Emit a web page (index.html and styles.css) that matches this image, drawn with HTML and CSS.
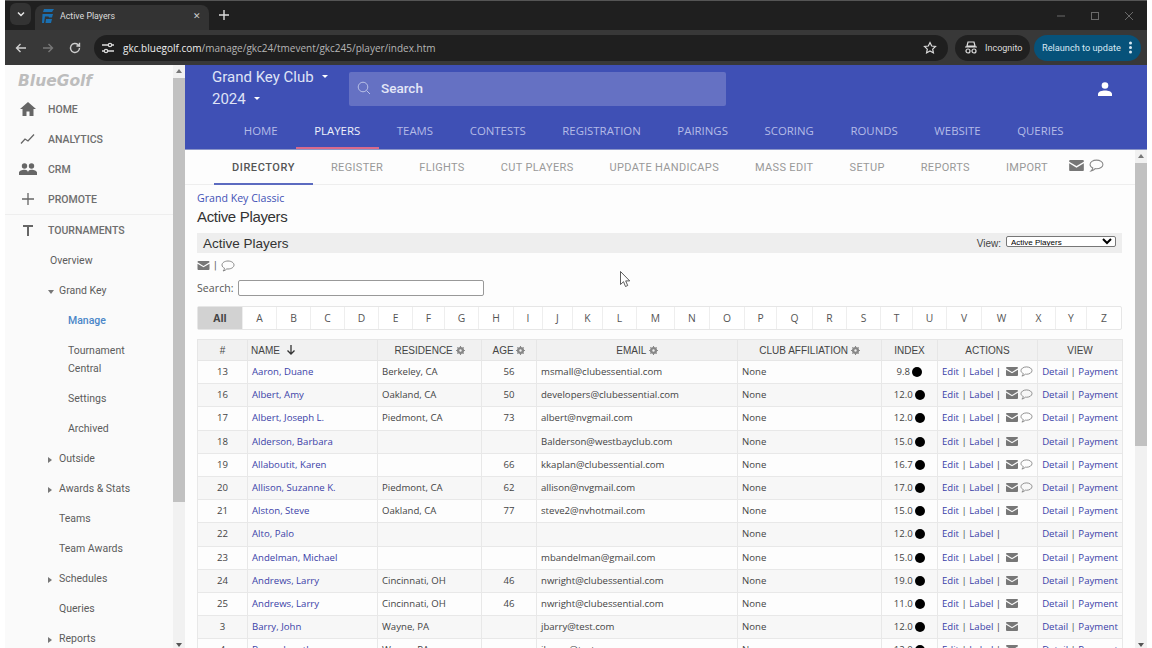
FILE: index.html
```html
<!DOCTYPE html>
<html lang="en">
<head>
<meta charset="utf-8">
<title>Active Players</title>
<link rel="stylesheet" href="styles.css">
</head>
<body>
<svg class="defs" width="0" height="0" aria-hidden="true">
  <symbol id="mail" viewBox="0 0 16 12"><path d="M0 1.2C0 .5.5 0 1.2 0h13.600c.7 0 1.200.5 1.200 1.200v.6L8 6.600 0 1.800z"/><path d="M0 3.600l8 4.800 8-4.800v7.200c0 .7-.5 1.200-1.200 1.200H1.200C.5 12 0 11.500 0 10.800z"/></symbol>
  <symbol id="chat" viewBox="0 0 14 12"><path d="M7 1C3.600 1 1 2.800 1 5c0 1.400 1 2.600 2.600 3.300C3.400 9.300 2.800 10.300 2 11c1.500-.3 2.900-1 3.800-2.100.4 0 .8.100 1.200.100 3.400 0 6-1.800 6-4s-2.600-4-6-4z" fill="none" stroke="currentColor"/></symbol>
  <symbol id="gear" viewBox="0 0 10 10"><circle cx="5" cy="5" r="2.900" fill="none" stroke="currentColor" stroke-width="2.200"/><path d="M5 0v10M0 5h10M1.500 1.500l7 7M8.500 1.500l-7 7" stroke="currentColor" stroke-width="1.200"/><circle cx="5" cy="5" r="1.300" fill="#f1f1f1"/></symbol>
</svg>
<div class="window">
  <div class="tabstrip">
    <div class="tab-menu"><svg width="10" height="10" viewBox="0 0 10 10"><path d="M2 3.500l3 3 3-3" fill="none" stroke="#e8e8e8" stroke-width="1.500"/></svg></div>
    <div class="tab">
      <svg class="favicon" width="12" height="14" viewBox="0 0 12 14"><path d="M2 0h10L10 3H1zM.5 5H11l-1 3.500H7l-.5-1H3L2 14H0zM4 10h6l-1 4H3.500z" fill="#1a6fb0"/></svg>
      <span class="tab-title">Active Players</span>
      <span class="tab-close">✕</span>
    </div>
    <svg class="tab-new" width="12" height="12" viewBox="0 0 12 12"><path d="M6 1v10M1 6h10" stroke="#ddd" stroke-width="1.400"/></svg>
    <div class="winctl">
      <svg width="10" height="10" viewBox="0 0 10 10"><path d="M1 5h8" stroke="#6a6a6a"/></svg>
      <svg width="10" height="10" viewBox="0 0 10 10"><rect x="1.500" y="1.500" width="7" height="7" fill="none" stroke="#6a6a6a"/></svg>
      <svg width="10" height="10" viewBox="0 0 10 10"><path d="M1 1l8 8M9 1l-8 8" stroke="#6a6a6a"/></svg>
    </div>
  </div>
  <div class="toolbar">
    <svg class="tool" width="14" height="14" viewBox="0 0 14 14"><path d="M12 7H2.500M6.500 3l-4 4 4 4" fill="none" stroke="#cfcfcf" stroke-width="1.400"/></svg>
    <svg class="tool" width="14" height="14" viewBox="0 0 14 14"><path d="M2 7h9.500M7.500 3l4 4-4 4" fill="none" stroke="#777" stroke-width="1.400"/></svg>
    <svg class="tool" width="14" height="14" viewBox="0 0 14 14"><path d="M11.500 7a4.500 4.500 0 1 1-1.400-3.300L11.500 5V1.800M11.500 5H8.400" fill="none" stroke="#cfcfcf" stroke-width="1.400"/></svg>
    <div class="omnibox">
      <svg class="site" width="14" height="12" viewBox="0 0 14 12"><path d="M1 3h6M11 3h2M1 9h2M7 9h6" stroke="#ddd" stroke-width="1.300"/><circle cx="9" cy="3" r="1.700" fill="none" stroke="#ddd" stroke-width="1.200"/><circle cx="5" cy="9" r="1.700" fill="none" stroke="#ddd" stroke-width="1.200"/></svg>
      <span class="url"><b>gkc.bluegolf.com</b>/manage/gkc24/tmevent/gkc245/player/index.htm</span>
      <svg class="star" width="14" height="14" viewBox="0 0 14 14"><path d="M7 1.500l1.700 3.500 3.800.5-2.800 2.600.7 3.800L7 10l-3.400 1.900.7-3.800L1.500 5.500 5.300 5z" fill="none" stroke="#ddd" stroke-width="1.200"/></svg>
    </div>
    <div class="incognito">
      <svg width="14" height="13" viewBox="0 0 14 13"><path d="M4 1h6l1 4H3zM1 6h12" fill="none" stroke="#ddd" stroke-width="1.200"/><circle cx="4" cy="10" r="2" fill="none" stroke="#ddd" stroke-width="1.200"/><circle cx="10" cy="10" r="2" fill="none" stroke="#ddd" stroke-width="1.200"/></svg>
      <span>Incognito</span>
    </div>
    <div class="relaunch"><span>Relaunch to update</span><i class="dots"></i></div>
  </div>
  <div class="viewport">
    <aside class="sidebar">
      <div class="side-scroll">
        <div class="logo">BlueGolf</div>
        <a class="side-main"><svg width="16" height="14" viewBox="0 0 16 14"><path d="M8 0L0 7h2.500v7h4V9.500h3V14h4V7H16z" fill="#666"/></svg><span>HOME</span></a>
        <a class="side-main"><svg width="16" height="12" viewBox="0 0 16 12"><path d="M1 10.500l4-4.500 3 2 6-6.500" fill="none" stroke="#666" stroke-width="1.300"/></svg><span>ANALYTICS</span></a>
        <a class="side-main"><svg class="wide" width="18" height="12" viewBox="0 0 18 12"><circle cx="5.500" cy="3" r="2.700" fill="#666"/><circle cx="12.500" cy="3" r="2.700" fill="#666"/><path d="M0 12V9.500C0 8 3 6.800 5.500 6.800S9 8 9 9.500V12zM9 12V9.500C9 8 10 6.800 12.500 6.800S18 8 18 9.500V12z" fill="#666"/></svg><span>CRM</span></a>
        <a class="side-main"><svg width="12" height="12" viewBox="0 0 12 12"><path d="M6 0v12M0 6h12" stroke="#666" stroke-width="1.300"/></svg><span>PROMOTE</span></a>
        <a class="side-main tour"><svg width="12" height="12" viewBox="0 0 12 12"><path d="M1 1h10v2H7v9H5V3H1z" fill="#666"/></svg><span>TOURNAMENTS</span></a>
        <a class="side-sub l1">Overview</a>
        <a class="side-sub l2 open">Grand Key</a>
        <a class="side-sub l3 current">Manage</a>
        <a class="side-sub l3 two">Tournament Central</a>
        <a class="side-sub l3">Settings</a>
        <a class="side-sub l3">Archived</a>
        <a class="side-sub l2 closed">Outside</a>
        <a class="side-sub l2 closed">Awards &amp; Stats</a>
        <a class="side-sub l2">Teams</a>
        <a class="side-sub l2">Team Awards</a>
        <a class="side-sub l2 closed">Schedules</a>
        <a class="side-sub l2">Queries</a>
        <a class="side-sub l2 closed">Reports</a>
      </div>
      <div class="scrollbar side-bar"><i class="arrow up"></i><i class="thumb"></i><i class="arrow down"></i></div>
    </aside>
    <div class="content">
      <header class="top">
        <div class="top-row">
          <div class="club">
            <div class="club-line">Grand Key Club <i class="caret"></i></div>
            <div class="club-line">2024 <i class="caret"></i></div>
          </div>
          <div class="search">
            <svg width="14" height="14" viewBox="0 0 14 14"><circle cx="6" cy="6" r="4.800" fill="none" stroke="#b9c0e6"/><path d="M9.500 9.500L13 13" stroke="#b9c0e6"/></svg>
            <span>Search</span>
          </div>
          <svg class="user" width="14" height="14" viewBox="0 0 14 14"><circle cx="7" cy="3.500" r="3.300" fill="#fff"/><path d="M0 14v-2c0-2.600 4-3.600 7-3.600s7 1 7 3.600v2z" fill="#fff"/></svg>
        </div>
        <nav class="mainnav">
          <a>HOME</a><a class="active">PLAYERS</a><a>TEAMS</a><a>CONTESTS</a><a>REGISTRATION</a><a>PAIRINGS</a><a>SCORING</a><a>ROUNDS</a><a>WEBSITE</a><a>QUERIES</a>
        </nav>
      </header>
      <div class="below">
        <main class="page">
          <nav class="subnav">
            <a class="active">DIRECTORY</a><a>REGISTER</a><a>FLIGHTS</a><a>CUT PLAYERS</a><a>UPDATE HANDICAPS</a><a>MASS EDIT</a><a>SETUP</a><a>REPORTS</a><a>IMPORT</a>
            <span class="sub-icons"><svg class="mail big"><use href="#mail"/></svg><svg class="chat big"><use href="#chat"/></svg></span>
          </nav>
          <div class="body">
            <a class="crumb">Grand Key Classic</a>
            <h1>Active Players</h1>
            <div class="section">
              <h2>Active Players</h2>
              <label class="view">View:<select><option>Active Players</option></select></label>
            </div>
            <div class="msg"><svg class="mail med"><use href="#mail"/></svg><span>|</span><svg class="chat med"><use href="#chat"/></svg></div>
            <div class="searchrow"><span>Search:</span><input type="text"></div>
            <div class="alpha">
              <a class="on">All</a><a>A</a><a>B</a><a>C</a><a>D</a><a>E</a><a>F</a><a>G</a><a>H</a><a>I</a><a>J</a><a>K</a><a>L</a><a>M</a><a>N</a><a>O</a><a>P</a><a>Q</a><a>R</a><a>S</a><a>T</a><a>U</a><a>V</a><a>W</a><a>X</a><a>Y</a><a>Z</a>
            </div>
            <table class="players">
              <colgroup><col class="c1"><col class="c2"><col class="c3"><col class="c4"><col class="c5"><col class="c6"><col class="c7"><col class="c8"><col class="c9"></colgroup>
              <thead>
                <tr>
                  <th>#</th>
                  <th class="left">NAME <svg class="sort" width="10" height="10" viewBox="0 0 10 10"><path d="M5 0v9M1.500 5.500L5 9l3.500-3.500" fill="none" stroke="#333" stroke-width="1.300"/></svg></th>
                  <th>RESIDENCE <svg class="gear"><use href="#gear"/></svg></th>
                  <th>AGE <svg class="gear"><use href="#gear"/></svg></th>
                  <th>EMAIL <svg class="gear"><use href="#gear"/></svg></th>
                  <th>CLUB AFFILIATION <svg class="gear"><use href="#gear"/></svg></th>
                  <th>INDEX</th><th>ACTIONS</th><th>VIEW</th>
                </tr>
              </thead>
              <tbody id="rows">
                <tr><td class="n">13</td><td><a>Aaron, Duane</a></td><td>Berkeley, CA</td><td class="n">56</td><td>msmall@clubessential.com</td><td>None</td><td class="n">9.8 <i class="dot"></i></td><td class="act"><a>Edit</a> | <a>Label</a> | <svg class="mail sm"><use href="#mail"/></svg> <svg class="chat sm"><use href="#chat"/></svg></td><td class="n"><a>Detail</a> | <a>Payment</a></td></tr>
                <tr><td class="n">16</td><td><a>Albert, Amy</a></td><td>Oakland, CA</td><td class="n">50</td><td>developers@clubessential.com</td><td>None</td><td class="n">12.0 <i class="dot"></i></td><td class="act"><a>Edit</a> | <a>Label</a> | <svg class="mail sm"><use href="#mail"/></svg> <svg class="chat sm"><use href="#chat"/></svg></td><td class="n"><a>Detail</a> | <a>Payment</a></td></tr>
                <tr><td class="n">17</td><td><a>Albert, Joseph L.</a></td><td>Piedmont, CA</td><td class="n">73</td><td>albert@nvgmail.com</td><td>None</td><td class="n">12.0 <i class="dot"></i></td><td class="act"><a>Edit</a> | <a>Label</a> | <svg class="mail sm"><use href="#mail"/></svg> <svg class="chat sm"><use href="#chat"/></svg></td><td class="n"><a>Detail</a> | <a>Payment</a></td></tr>
                <tr><td class="n">18</td><td><a>Alderson, Barbara</a></td><td></td><td class="n"></td><td>Balderson@westbayclub.com</td><td>None</td><td class="n">15.0 <i class="dot"></i></td><td class="act"><a>Edit</a> | <a>Label</a> | <svg class="mail sm"><use href="#mail"/></svg></td><td class="n"><a>Detail</a> | <a>Payment</a></td></tr>
                <tr><td class="n">19</td><td><a>Allaboutit, Karen</a></td><td></td><td class="n">66</td><td>kkaplan@clubessential.com</td><td>None</td><td class="n">16.7 <i class="dot"></i></td><td class="act"><a>Edit</a> | <a>Label</a> | <svg class="mail sm"><use href="#mail"/></svg> <svg class="chat sm"><use href="#chat"/></svg></td><td class="n"><a>Detail</a> | <a>Payment</a></td></tr>
                <tr><td class="n">20</td><td><a>Allison, Suzanne K.</a></td><td>Piedmont, CA</td><td class="n">62</td><td>allison@nvgmail.com</td><td>None</td><td class="n">17.0 <i class="dot"></i></td><td class="act"><a>Edit</a> | <a>Label</a> | <svg class="mail sm"><use href="#mail"/></svg> <svg class="chat sm"><use href="#chat"/></svg></td><td class="n"><a>Detail</a> | <a>Payment</a></td></tr>
                <tr><td class="n">21</td><td><a>Alston, Steve</a></td><td>Oakland, CA</td><td class="n">77</td><td>steve2@nvhotmail.com</td><td>None</td><td class="n">15.0 <i class="dot"></i></td><td class="act"><a>Edit</a> | <a>Label</a> | <svg class="mail sm"><use href="#mail"/></svg></td><td class="n"><a>Detail</a> | <a>Payment</a></td></tr>
                <tr><td class="n">22</td><td><a>Alto, Palo</a></td><td></td><td class="n"></td><td></td><td>None</td><td class="n">12.0 <i class="dot"></i></td><td class="act"><a>Edit</a> | <a>Label</a> |</td><td class="n"><a>Detail</a> | <a>Payment</a></td></tr>
                <tr><td class="n">23</td><td><a>Andelman, Michael</a></td><td></td><td class="n"></td><td>mbandelman@gmail.com</td><td>None</td><td class="n">15.0 <i class="dot"></i></td><td class="act"><a>Edit</a> | <a>Label</a> | <svg class="mail sm"><use href="#mail"/></svg></td><td class="n"><a>Detail</a> | <a>Payment</a></td></tr>
                <tr><td class="n">24</td><td><a>Andrews, Larry</a></td><td>Cincinnati, OH</td><td class="n">46</td><td>nwright@clubessential.com</td><td>None</td><td class="n">19.0 <i class="dot"></i></td><td class="act"><a>Edit</a> | <a>Label</a> | <svg class="mail sm"><use href="#mail"/></svg></td><td class="n"><a>Detail</a> | <a>Payment</a></td></tr>
                <tr><td class="n">25</td><td><a>Andrews, Larry</a></td><td>Cincinnati, OH</td><td class="n">46</td><td>nwright@clubessential.com</td><td>None</td><td class="n">11.0 <i class="dot"></i></td><td class="act"><a>Edit</a> | <a>Label</a> | <svg class="mail sm"><use href="#mail"/></svg></td><td class="n"><a>Detail</a> | <a>Payment</a></td></tr>
                <tr><td class="n">3</td><td><a>Barry, John</a></td><td>Wayne, PA</td><td class="n"></td><td>jbarry@test.com</td><td>None</td><td class="n">12.0 <i class="dot"></i></td><td class="act"><a>Edit</a> | <a>Label</a> | <svg class="mail sm"><use href="#mail"/></svg></td><td class="n"><a>Detail</a> | <a>Payment</a></td></tr>
                <tr><td class="n">4</td><td><a>Byrne, Jonathan</a></td><td>Wayne, PA</td><td class="n"></td><td>jbyrne@test.com</td><td>None</td><td class="n">12.0 <i class="dot"></i></td><td class="act"><a>Edit</a> | <a>Label</a> | <svg class="mail sm"><use href="#mail"/></svg></td><td class="n"><a>Detail</a> | <a>Payment</a></td></tr>
              </tbody>
            </table>
          </div>
        </main>
        <div class="scrollbar main-bar"><i class="arrow up"></i><i class="thumb"></i><i class="arrow down"></i></div>
      </div>
    </div>
  </div>
</div>
<svg class="cursor" width="11" height="17" viewBox="0 0 11 17"><path d="M.5.500v13l3-2.800 2 4.800 2.200-1-2-4.600h4z" fill="#fff" stroke="#333" stroke-width=".8"/></svg>
</body>
</html>
```
FILE: styles.css
```css
* { box-sizing: border-box; }
html, body { margin: 0; height: 100%; overflow: hidden; background: #fff; }
body { font-family: Roboto, sans-serif; color: #444; position: relative; }
a { text-decoration: none; }
.defs { position: absolute; }

.window { height: 648px; margin: 0 5px; display: flex; flex-direction: column; }

.tabstrip { height: 30px; flex: none; background: #1f1f1f; border-top: 1px solid #555; display: flex; align-items: flex-end; padding-left: 5px; }
.tab-menu { width: 21px; height: 22px; margin-bottom: 5px; background: #333; border-radius: 6px; display: flex; align-items: center; justify-content: center; }
.tab { width: 174px; height: 25px; margin-left: 4px; background: #333; border-radius: 8px 8px 0 0; display: flex; align-items: center; padding: 0 8px 4px 7px; }
.favicon { margin-right: 6px; flex: none; }
.tab-title { flex: 1; font: 8.800px Roboto, sans-serif; color: #ddd; }
.tab-close { font-size: 9px; color: #ccc; }
.tab-new { margin: 0 0 9px 9px; }
.winctl { margin-left: auto; display: flex; gap: 24px; padding-right: 13px; margin-bottom: 9px; }

.toolbar { height: 35px; flex: none; background: #383838; display: flex; align-items: center; padding: 0 5px 0 9px; }
.tool { margin-right: 13px; flex: none; }
.omnibox { width: 854px; height: 26px; margin-left: -1px; background: #1f1f1f; border-radius: 13px; display: flex; align-items: center; padding: 0 11px 0 7px; }
.site { margin-right: 8px; }
.url { font: 10px "Open Sans", sans-serif; color: #b5b5b5; flex: 1; white-space: nowrap; }
.url b { font-weight: 400; color: #eee; }
.incognito { width: 75px; height: 26px; margin-left: 7px; background: #202020; border-radius: 13px; display: flex; align-items: center; gap: 7px; padding-left: 9px; font: 9px Roboto, sans-serif; color: #ddd; flex: none; }
.relaunch { width: 107px; height: 26px; margin-left: 4px; background: #07527a; border-radius: 13px; display: flex; align-items: center; justify-content: space-between; padding: 0 9px 0 8px; font: 9.200px Roboto, sans-serif; color: #d7e8f3; flex: none; white-space: nowrap; }
.dots { width: 3px; height: 3px; border-radius: 50%; background: #d7e8f3; box-shadow: 0 -4.500px 0 #d7e8f3, 0 4.500px 0 #d7e8f3; }

.viewport { flex: 1; min-height: 0; display: flex; }

.sidebar { width: 180px; flex: none; display: flex; background: #fafafa; }
.side-scroll { flex: 1; min-width: 0; overflow: hidden; }
.logo { height: 29px; padding: 7px 0 0 13px; font: italic 700 15.500px/18px "DejaVu Sans", sans-serif; color: #bdbdbd; }
.side-main { display: flex; align-items: center; height: 30px; font-size: 10.500px; font-weight: 500; color: #6e6e6e; }
.side-main svg { width: 18px; margin-left: 14px; flex: none; }
.side-main span { margin-left: 11px; }
.side-main.tour { border-top: 1px solid #eee; height: 31px; margin-bottom: 1px; }
.side-sub { display: block; font-size: 10.500px; line-height: 18px; color: #5c5c5c; padding: 6px 10px 6px 0; position: relative; }
.l1 { padding-left: 45px; }
.l2 { padding-left: 54px; }
.l3 { padding-left: 63px; }
.two { width: 150px; }
.current { color: #4a86c8; font-weight: 500; }
.open::before, .closed::before { content: ""; position: absolute; left: 43px; top: 13px; border: 3px solid transparent; }
.open::before { border-top: 4px solid #777; border-bottom: 0; top: 14px; }
.closed::before { border-left: 4px solid #777; border-right: 0; }

.scrollbar { width: 12px; flex: none; background: #f1f1f1; display: flex; flex-direction: column; align-items: center; position: relative; }
.thumb { display: block; width: 100%; background: #c1c1c1; }
.arrow { display: block; position: absolute; border: 3px solid transparent; }
.arrow.up { top: 4px; border-bottom: 4px solid #777; border-top: 0; }
.arrow.down { bottom: 1px; border-top: 4px solid #555; border-bottom: 0; }
.side-bar .thumb { height: 424px; margin-top: 13px; }
.main-bar .thumb { height: 283px; margin-top: 13px; }

.content { flex: 1; min-width: 0; display: flex; flex-direction: column; }
.top { height: 85px; flex: none; background: #3f50b5; border-bottom: 1px solid #8c96c8; }
.top-row { height: 51px; display: flex; }
.club { width: 164px; padding: 1px 0 0 27px; }
.club-line { height: 22px; font-size: 15px; line-height: 22px; color: #dfe3f5; }
.caret { display: inline-block; margin: 0 0 3px 5px; vertical-align: middle; border: 3px solid transparent; border-top: 3px solid #fff; border-bottom: 0; }
.search { width: 377px; height: 34px; margin-top: 7px; background: #6571c3; border-radius: 2px; display: flex; align-items: center; gap: 10px; padding: 0 0 2px 8px; font-size: 13.500px; font-weight: 500; color: #e4e7f7; }
.user { margin: 17px 35px 0 auto; }
.mainnav { height: 33px; display: flex; padding-left: 40.500px; }
.mainnav a { padding: 0 18.300px; font: 500 11.400px/30px "Open Sans", sans-serif; color: #b4bbe7; height: 33px; }
.mainnav a.active { color: #eef0fb; border-bottom: 2px solid #d86a8c; }

.below { flex: 1; min-height: 0; display: flex; }
.page { flex: 1; min-width: 0; overflow: hidden; background: #fdfdfd; }
.subnav { height: 35px; display: flex; align-items: center; padding-left: 29px; border-bottom: 1px solid #eee; font-size: 11px; color: #999; letter-spacing: .33px; }
.subnav a { padding: 0 18px; line-height: 35px; height: 35px; }
.subnav a.active { color: #555; font-weight: 500; border-bottom: 2px solid #5c6bc0; letter-spacing: .55px; }
.sub-icons { display: flex; align-items: center; gap: 5px; margin: -3px 0 0 3px; }

.mail { fill: #777; }
.mail.big { width: 15px; height: 11px; }
.mail.med { width: 13px; height: 9px; }
.mail.sm { width: 12px; height: 9px; margin-left: 2px; vertical-align: -1px; }
.chat { color: #888; fill: none; }
.chat.big { width: 15px; height: 13px; }
.chat.med { width: 14px; height: 12px; }
.chat.sm { width: 13px; height: 11px; vertical-align: -2px; }

.body { padding: 6px 0 0 12px; width: 937px; }
.crumb { display: block; font: 10.600px/15px "Open Sans", sans-serif; color: #3f50b5; }
h1 { margin: 1px 0 0; font: 400 15px/20px "Liberation Sans", sans-serif; letter-spacing: -.33px; color: #333; }
.section { height: 20px; margin-top: 6px; background: #eee; display: flex; align-items: center; justify-content: space-between; padding-left: 6px; }
h2 { margin: 0; font: 400 13.500px/19px "Liberation Sans", sans-serif; color: #333; }
.view { display: flex; align-items: center; gap: 5px; font: 10px "Liberation Sans", sans-serif; color: #444; padding-right: 6px; }
.view select { width: 110px; height: 11px; margin-top: -4px; font: 8px "Liberation Sans", sans-serif; padding: 0; background: #fff; border: 1px solid #777; border-radius: 2px; }
.msg { height: 25px; display: flex; align-items: center; gap: 4px; font-size: 11px; color: #666; }
.searchrow { display: flex; align-items: center; gap: 4px; height: 16px; margin-top: 2px; font: 10.500px "Open Sans", sans-serif; letter-spacing: .1px; color: #555; }
.searchrow input { width: 246px; height: 16px; padding: 0; border: 1px solid #999; border-radius: 2px; background: #fff; }
.alpha { display: grid; grid-template-columns: 45px 34px 34px 34px 34px 34px 32px 34px 35px 29px 30px 30px 34px 38px 35px 35px 32px 36px 34px 34px 32px 34px 35px 40px 34px 31px 34px; height: 24px; margin-top: 10px; border: 1px solid #e6e6e6; border-radius: 2px; background: #fff; }
.alpha a { display: flex; align-items: center; justify-content: center; font: 10.300px "Open Sans", sans-serif; color: #555; border-right: 1px solid #eee; }
.alpha a:last-child { border-right: 0; }
.alpha a.on { background: #d2d2d2; font-weight: 700; color: #444; }

.players { width: 925px; margin-top: 9px; table-layout: fixed; border-collapse: collapse; font: 9.600px/11px "Open Sans", sans-serif; color: #444; }
.c1 { width: 50px; } .c2 { width: 130px; } .c3 { width: 104px; } .c4 { width: 55px; } .c5 { width: 201px; } .c6 { width: 144px; } .c7 { width: 56px; } .c8 { width: 100px; } .c9 { width: 85px; }
.players th { height: 21px; padding: 0; background: #f1f1f1; border: 1px solid #e6e6e6; font: 400 10px "Liberation Sans", sans-serif; color: #444; text-align: center; white-space: nowrap; }
.players th.left { text-align: left; padding-left: 3px; }
.players td { height: 23.200px; padding: 0 4px 1px; border: 1px solid #e8e8e8; white-space: nowrap; overflow: hidden; }
.players tbody tr:nth-child(even) td { background: #f7f7f7; }
.players td.n { text-align: center; }
.players a { color: #3b3fa8; }
.sort { vertical-align: -1px; margin-left: 3px; }
.gear { width: 9px; height: 9px; color: #888; vertical-align: -1px; }
.dot { display: inline-block; width: 10px; height: 10px; border-radius: 50%; background: #000; vertical-align: -2px; }

.cursor { position: absolute; left: 620px; top: 271px; }
```
